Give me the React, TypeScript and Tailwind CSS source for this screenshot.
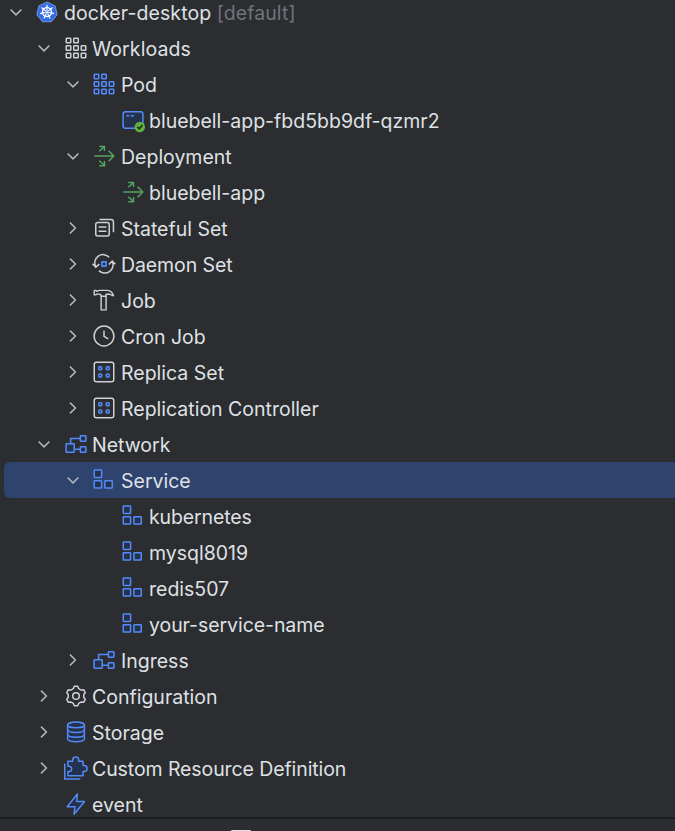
import type { ReactNode } from "react";

const BLUE = "#548af7";
const FILL = "#25324d";
const GREY = "#ced0d6";
const GREEN = "#57a35e";

function Svg({ children }: { children: ReactNode }) {
  return (
    <svg viewBox="0 0 16 16" className="h-6 w-6 shrink-0 overflow-visible" fill="none">
      {children}
    </svg>
  );
}

function polar(cx: number, cy: number, r: number, deg: number) {
  const a = ((deg - 90) * Math.PI) / 180;
  return `${(cx + r * Math.cos(a)).toFixed(2)} ${(cy + r * Math.sin(a)).toFixed(2)}`;
}

const seven = [0, 1, 2, 3, 4, 5, 6].map((i) => (i * 360) / 7);
const heptagon = "M" + seven.map((d) => polar(8, 8.25, 6.95, d)).join("L") + "Z";
const spokes = seven.map((d) => `M${polar(8, 8, 0.9, d)}L${polar(8, 8, 4.8, d)}`).join("");
const gear =
  "M" +
  [0, 60, 120, 180, 240, 300]
    .map(
      (d) =>
        `${polar(8, 8, 6.6, d - 10)}L${polar(8, 8, 6.6, d + 10)}L${polar(8, 8, 5.35, d + 19)}Q${polar(8, 8, 4.95, d + 30)} ${polar(8, 8, 5.35, d + 41)}`,
    )
    .join("L") +
  "Z";

const Kubernetes = () => (
  <Svg>
    <path d={heptagon} fill="#326ce5" stroke="#8fadeb" strokeWidth="0.5" strokeLinejoin="round" />
    <path d={spokes} stroke="#fff" strokeWidth="0.75" />
    <circle cx="8" cy="8" r="3" stroke="#fff" strokeWidth="0.95" />
    <circle cx="8" cy="8" r="0.7" fill="#fff" />
  </Svg>
);

const Grid = ({ color, fill }: { color: string; fill?: string }) => (
  <Svg>
    {[
      [1.5, 1.5], [6.5, 1.5],
      [1.5, 6.5], [6.5, 6.5], [11.5, 6.5],
      [1.5, 11.5], [6.5, 11.5], [11.5, 11.5],
    ].map(([x, y]) => (
      <rect key={`${x}-${y}`} x={x} y={y} width="3" height="3" rx="0.4" stroke={color} fill={fill} />
    ))}
  </Svg>
);

const PodItem = () => (
  <Svg>
    <rect x="1.4" y="2.5" width="13.2" height="11" rx="1.5" fill={FILL} stroke={BLUE} />
    <path d="M3.6 5.1H5.5M6.5 5.1H8.5" stroke={BLUE} />
    <circle cx="12.5" cy="12.7" r="3.5" fill="#5fb33b" />
    <path d="M10.9 12.6L12.2 13.9L14.3 11.3" stroke="#202b1d" strokeWidth="1.05" />
  </Svg>
);

const Deployment = () => (
  <Svg>
    <path
      d="M1.5 8H14.5M11.1 4.5L14.5 8L11.1 11.5M4.8 4.8L8.2 1.8M4.8 1.6H8.3V4.6M4.8 11.2L8.2 14.2M4.8 14.5H8.3V11.4"
      stroke={GREEN}
    />
  </Svg>
);

const StatefulSet = () => (
  <Svg>
    <rect x="2.5" y="4.3" width="9" height="9" rx="1.3" stroke={GREY} />
    <path d="M5 2.4H12.5Q14.3 2.4 14.3 4.2V10.9M4.4 7.3H9.6M4.4 10.2H9.6" stroke={GREY} />
  </Svg>
);

const DaemonSet = () => (
  <Svg>
    <path
      d="M11.4 3.5A5.5 5.5 0 0 0 2.5 9.8M0.4 7.9L2.5 10.1L4.9 8.1M4.6 12.4A5.5 5.5 0 0 0 13.5 6.2M11.3 8.3L13.5 6L15.6 8.2"
      stroke={GREY}
    />
    <rect x="6.6" y="6.6" width="2.8" height="2.8" rx="0.3" stroke={BLUE} fill={FILL} strokeWidth="1.1" />
  </Svg>
);

const Job = () => (
  <Svg>
    <path
      d="M1.5 1.6H2.6L3.2 2.2L4.8 1.6H9.8C12.2 1.6 13.7 3 14.3 5.2L11.9 4.2H9.4V14.6H6.1V4.9L5.2 4.1H3.2L2.5 4.6H1.5ZM6.1 5.5H9.4"
      stroke={GREY}
      strokeWidth="0.95"
      strokeLinejoin="round"
    />
  </Svg>
);

const CronJob = () => (
  <Svg>
    <circle cx="8" cy="8" r="6.6" stroke={GREY} />
    <path d="M8 4.5V8.2L10.8 9.9" stroke={GREY} />
  </Svg>
);

const Replica = () => (
  <Svg>
    <rect x="1.5" y="1.5" width="13" height="13" rx="1.5" stroke={GREY} />
    {[[5.5, 5.5], [10.5, 5.5], [5.5, 10.4], [10.5, 10.4]].map(([x, y]) => (
      <rect key={`${x}-${y}`} x={x - 1} y={y - 1} width="2" height="2" rx="0.5" stroke={BLUE} fill={FILL} />
    ))}
  </Svg>
);

const Network = () => (
  <Svg>
    <path d="M4.4 8V4.3H11M7 11.5H11" stroke={BLUE} />
    <rect x="1.4" y="7.9" width="5.4" height="5.6" rx="0.4" fill={FILL} stroke={BLUE} />
    <rect x="10.9" y="2.5" width="3.7" height="3.6" rx="0.4" fill={FILL} stroke={BLUE} />
    <rect x="10.9" y="9.8" width="3.7" height="3.7" rx="0.4" fill={FILL} stroke={BLUE} />
  </Svg>
);

const Service = () => (
  <Svg>
    <rect x="1.5" y="1.4" width="4.9" height="4.9" rx="0.4" fill={FILL} stroke={BLUE} />
    <rect x="1.5" y="8.5" width="4.9" height="4.9" rx="0.4" fill={FILL} stroke={BLUE} />
    <rect x="8.6" y="8.5" width="4.9" height="4.9" rx="0.4" fill={FILL} stroke={BLUE} />
  </Svg>
);

const Configuration = () => (
  <Svg>
    <path d={gear} stroke={GREY} strokeLinejoin="round" />
    <circle cx="8" cy="8" r="2.2" stroke={GREY} />
  </Svg>
);

const Storage = () => (
  <Svg>
    <path d="M2.4 3.3V12.5C2.4 15.1 13.6 15.1 13.6 12.5V3.3" fill={FILL} stroke={BLUE} />
    <ellipse cx="8" cy="3.3" rx="5.6" ry="1.9" fill={FILL} stroke={BLUE} />
    <path d="M2.4 6.4C2.4 9 13.6 9 13.6 6.4M2.4 9.5C2.4 12.1 13.6 12.1 13.6 9.5" stroke={BLUE} />
  </Svg>
);

const Custom = () => (
  <Svg>
    <path
      d="M2.6 3.5H5.8V2.7A2 2 0 0 1 9.8 2.7V3.5H12.7V6.4H13.4A2 2 0 0 1 13.4 10.4H12.7V13.2H2.6V10.3H3.4A1.7 1.7 0 0 0 3.4 6.9H2.6Z"
      fill={FILL}
      stroke={BLUE}
      strokeLinejoin="round"
    />
    <path d="M0.5 5V15.4H10.8" stroke={BLUE} />
  </Svg>
);

const Event = () => (
  <Svg>
    <path
      d="M8.9 1.3L2.1 9.8H7.3L6.7 14.8L13.7 6.4H8.5Z"
      fill={FILL}
      stroke={BLUE}
      strokeLinejoin="round"
    />
  </Svg>
);

function Chevron({ state }: { state?: "open" | "closed" }) {
  return (
    <Svg>
      {state === "open" && <path d="M4.4 6.3L8 9.9L11.6 6.3" stroke="#b4b8bf" />}
      {state === "closed" && <path d="M6 4.4L9.6 8L6 11.6" stroke="#b4b8bf" />}
    </Svg>
  );
}

type Row = {
  level: 0 | 1 | 2 | 3;
  state?: "open" | "closed";
  icon: ReactNode;
  label: string;
  note?: string;
  selected?: boolean;
  tracking?: string;
};

const rows: Row[] = [
  { level: 0, state: "open", icon: <Kubernetes />, label: "docker-desktop", note: "[default]", tracking: "tracking-[0.08px]" },
  { level: 1, state: "open", icon: <Grid color={GREY} />, label: "Workloads", tracking: "tracking-[0.1px]" },
  { level: 2, state: "open", icon: <Grid color={BLUE} fill={FILL} />, label: "Pod" },
  { level: 3, icon: <PodItem />, label: "bluebell-app-fbd5bb9df-qzmr2" },
  { level: 2, state: "open", icon: <Deployment />, label: "Deployment" },
  { level: 3, icon: <Deployment />, label: "bluebell-app" },
  { level: 2, state: "closed", icon: <StatefulSet />, label: "Stateful Set" },
  { level: 2, state: "closed", icon: <DaemonSet />, label: "Daemon Set", tracking: "tracking-[-0.1px]" },
  { level: 2, state: "closed", icon: <Job />, label: "Job" },
  { level: 2, state: "closed", icon: <CronJob />, label: "Cron Job" },
  { level: 2, state: "closed", icon: <Replica />, label: "Replica Set" },
  { level: 2, state: "closed", icon: <Replica />, label: "Replication Controller" },
  { level: 1, state: "open", icon: <Network />, label: "Network" },
  { level: 2, state: "open", icon: <Service />, label: "Service", selected: true },
  { level: 3, icon: <Service />, label: "kubernetes", tracking: "tracking-[-0.12px]" },
  { level: 3, icon: <Service />, label: "mysql8019" },
  { level: 3, icon: <Service />, label: "redis507" },
  { level: 3, icon: <Service />, label: "your-service-name", tracking: "tracking-[-0.07px]" },
  { level: 2, state: "closed", icon: <Network />, label: "Ingress" },
  { level: 1, state: "closed", icon: <Configuration />, label: "Configuration" },
  { level: 1, state: "closed", icon: <Storage />, label: "Storage" },
  { level: 1, state: "closed", icon: <Custom />, label: "Custom Resource Definition", tracking: "tracking-[-0.09px]" },
  { level: 1, icon: <Event />, label: "event" },
];

const indent = ["pl-0", "pl-[28px]", "pl-[57px]", "pl-[86px]"];
const iconGap = ["ml-[7px]", "ml-2", "ml-[7px]", "ml-[7px]"];
const labelGap = ["ml-[5px]", "ml-1", "ml-[5px]", "ml-1"];

export default function App() {
  return (
    <div className="flex h-[831px] w-[675px] flex-col overflow-hidden bg-[#2b2d30] font-['Inter',sans-serif] text-[19.5px] text-[#dfe1e5]">
      <div className="flex h-[817px] shrink-0 flex-col justify-end overflow-hidden pl-1">
        <div className="-mb-[5px] flex flex-col">
          {rows.map((row) => (
            <div
              key={row.label}
              className={`flex h-9 shrink-0 items-center rounded-l-[6px] ${indent[row.level]} ${row.selected ? "bg-[#2e436e]" : ""}`}
            >
              <Chevron state={row.state} />
              <span className={`flex ${iconGap[row.level]}`}>{row.icon}</span>
              <span className={`pt-0.5 leading-6 whitespace-pre ${labelGap[row.level]} ${row.tracking ?? ""}`}>
                {row.label}
                {row.note && <span className="text-[#6f737a]"> {row.note}</span>}
              </span>
            </div>
          ))}
        </div>
      </div>
      <div className="h-[2px] shrink-0 bg-[#1e1f22]" />
      <div className="flex flex-1 items-end pl-[231px]">
        <div className="h-[1px] w-5 rounded-t-sm bg-[#dfe1e5]" />
      </div>
    </div>
  );
}
